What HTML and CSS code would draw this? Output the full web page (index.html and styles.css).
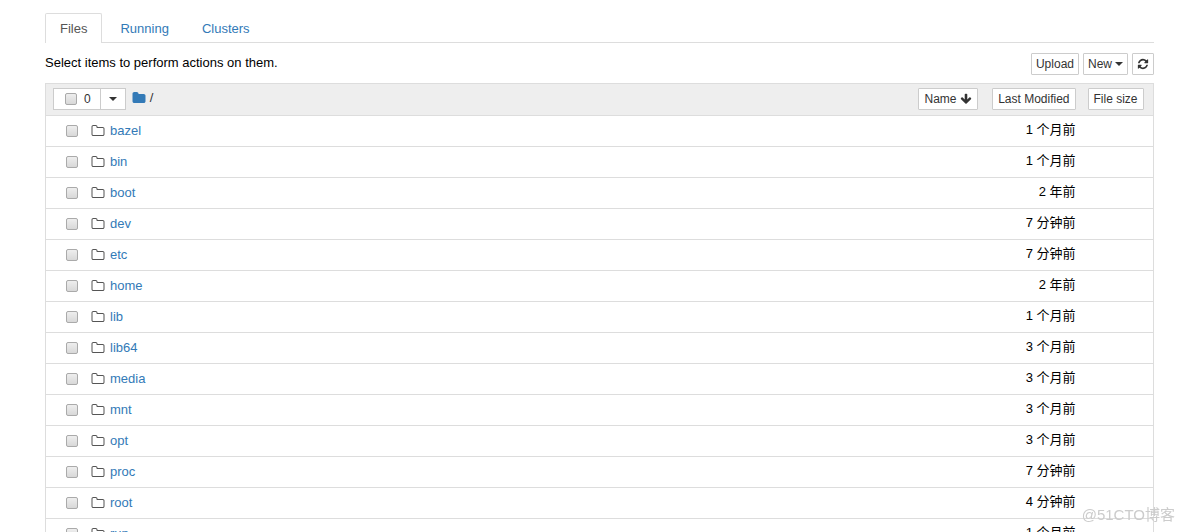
FILE: index.html
```html
<!DOCTYPE html>
<html lang="en">
<head>
  <meta charset="UTF-8">
  <title>Home</title>
  <link rel="stylesheet" href="styles.css">
</head>
<body>

<svg class="sprite" aria-hidden="true">
  <symbol id="folder-o" viewBox="0 0 1792 1792"><path d="M1600 1312v-704q0-40-28-68t-68-28h-704q-40 0-68-28t-28-68v-64q0-40-28-68t-68-28h-320q-40 0-68 28t-28 68v960q0 40 28 68t68 28h1216q40 0 68-28t28-68zm128-704v704q0 92-66 158t-158 66h-1216q-92 0-158-66t-66-158v-960q0-92 66-158t158-66h320q92 0 158 66t66 158v32h672q92 0 158 66t66 158z"/></symbol>
  <symbol id="folder" viewBox="0 0 1792 1792"><path d="M1728 608v704q0 92-66 158t-158 66h-1216q-92 0-158-66t-66-158v-960q0-92 66-158t158-66h320q92 0 158 66t66 158v32h672q92 0 158 66t66 158z"/></symbol>
  <symbol id="arrow-down" viewBox="0 0 1792 1792"><path d="M1675 832q0 53-37 90l-651 652q-39 37-91 37-53 0-90-37l-651-652q-38-36-38-90 0-53 38-91l74-75q39-37 91-37 53 0 90 37l294 294v-704q0-52 38-90t90-38h128q52 0 90 38t38 90v704l294-294q37-37 90-37 52 0 91 37l75 75q37 39 37 91z"/></symbol>
  <symbol id="refresh" viewBox="0 0 1792 1792"><path d="M1639 1056q0 5-1 7-64 268-268 434.5t-478 166.5q-146 0-282.5-55t-243.5-157l-129 129q-19 19-45 19t-45-19-19-45v-448q0-26 19-45t45-19h448q26 0 45 19t19 45-19 45l-137 137q71 66 161 102t187 36q134 0 250-65t186-179q11-17 53-117 8-23 30-23h192q13 0 22.5 9.5t9.5 22.5zm25-800v448q0 26-19 45t-45 19h-448q-26 0-45-19t-19-45 19-45l138-138q-148-137-349-137-134 0-250 65t-186 179q-11 17-53 117-8 23-30 23h-199q-13 0-22.5-9.5t-9.5-22.5v-7q65-268 270-434.5t480-166.5q146 0 284 55.5t245 156.5l130-129q19-19 45-19t45 19 19 45z"/></symbol>
</svg>

<div class="container">
  <nav class="tabs">
    <a class="tab active" href="#files">Files</a>
    <a class="tab" href="#running">Running</a>
    <a class="tab" href="#clusters">Clusters</a>
  </nav>

  <div class="toolbar">
    <p class="info">Select items to perform actions on them.</p>
    <div class="actions">
      <button class="btn" type="button">Upload</button>
      <button class="btn" type="button">New <span class="caret"></span></button>
      <button class="btn" type="button" aria-label="Refresh"><svg class="icon-sm"><use href="#refresh"/></svg></button>
    </div>
  </div>

  <table class="list">
    <thead>
      <tr>
        <th>
          <div class="head">
            <div class="selector">
              <label class="select-all"><input type="checkbox">0</label>
              <button class="select-menu" type="button" aria-label="Selection menu"><span class="caret"></span></button>
            </div>
            <div class="breadcrumb"><a href="#home" aria-label="Home"><svg class="icon"><use href="#folder"/></svg></a> /</div>
            <button class="btn sort-name" type="button">Name <svg class="icon-sm"><use href="#arrow-down"/></svg></button>
          </div>
        </th>
        <th class="modified"><button class="btn" type="button">Last Modified</button></th>
        <th class="size"><button class="btn" type="button">File size</button></th>
      </tr>
    </thead>
    <tbody>
      <tr>
        <td><div class="item"><input type="checkbox" aria-label="bazel"><svg class="icon"><use href="#folder-o"/></svg><a href="#bazel">bazel</a></div></td>
        <td class="modified">1 个月前</td>
        <td></td>
      </tr>
      <tr>
        <td><div class="item"><input type="checkbox" aria-label="bin"><svg class="icon"><use href="#folder-o"/></svg><a href="#bin">bin</a></div></td>
        <td class="modified">1 个月前</td>
        <td></td>
      </tr>
      <tr>
        <td><div class="item"><input type="checkbox" aria-label="boot"><svg class="icon"><use href="#folder-o"/></svg><a href="#boot">boot</a></div></td>
        <td class="modified">2 年前</td>
        <td></td>
      </tr>
      <tr>
        <td><div class="item"><input type="checkbox" aria-label="dev"><svg class="icon"><use href="#folder-o"/></svg><a href="#dev">dev</a></div></td>
        <td class="modified">7 分钟前</td>
        <td></td>
      </tr>
      <tr>
        <td><div class="item"><input type="checkbox" aria-label="etc"><svg class="icon"><use href="#folder-o"/></svg><a href="#etc">etc</a></div></td>
        <td class="modified">7 分钟前</td>
        <td></td>
      </tr>
      <tr>
        <td><div class="item"><input type="checkbox" aria-label="home"><svg class="icon"><use href="#folder-o"/></svg><a href="#home">home</a></div></td>
        <td class="modified">2 年前</td>
        <td></td>
      </tr>
      <tr>
        <td><div class="item"><input type="checkbox" aria-label="lib"><svg class="icon"><use href="#folder-o"/></svg><a href="#lib">lib</a></div></td>
        <td class="modified">1 个月前</td>
        <td></td>
      </tr>
      <tr>
        <td><div class="item"><input type="checkbox" aria-label="lib64"><svg class="icon"><use href="#folder-o"/></svg><a href="#lib64">lib64</a></div></td>
        <td class="modified">3 个月前</td>
        <td></td>
      </tr>
      <tr>
        <td><div class="item"><input type="checkbox" aria-label="media"><svg class="icon"><use href="#folder-o"/></svg><a href="#media">media</a></div></td>
        <td class="modified">3 个月前</td>
        <td></td>
      </tr>
      <tr>
        <td><div class="item"><input type="checkbox" aria-label="mnt"><svg class="icon"><use href="#folder-o"/></svg><a href="#mnt">mnt</a></div></td>
        <td class="modified">3 个月前</td>
        <td></td>
      </tr>
      <tr>
        <td><div class="item"><input type="checkbox" aria-label="opt"><svg class="icon"><use href="#folder-o"/></svg><a href="#opt">opt</a></div></td>
        <td class="modified">3 个月前</td>
        <td></td>
      </tr>
      <tr>
        <td><div class="item"><input type="checkbox" aria-label="proc"><svg class="icon"><use href="#folder-o"/></svg><a href="#proc">proc</a></div></td>
        <td class="modified">7 分钟前</td>
        <td></td>
      </tr>
      <tr>
        <td><div class="item"><input type="checkbox" aria-label="root"><svg class="icon"><use href="#folder-o"/></svg><a href="#root">root</a></div></td>
        <td class="modified">4 分钟前</td>
        <td></td>
      </tr>
      <tr>
        <td><div class="item"><input type="checkbox" aria-label="run"><svg class="icon"><use href="#folder-o"/></svg><a href="#run">run</a></div></td>
        <td class="modified">1 个月前</td>
        <td></td>
      </tr>
    </tbody>
  </table>
</div>

<div class="watermark">@51CTO博客</div>

</body>
</html>
```
FILE: styles.css
```css
* {
  box-sizing: border-box;
}

body {
  margin: 0;
  height: 100vh;
  overflow: hidden;
  background: #fff;
  color: #000;
  font-family: "Liberation Sans", Arial, "Noto Sans CJK SC", sans-serif;
  font-size: 13px;
  line-height: 20px;
}

a {
  color: #337ab7;
  text-decoration: none;
}

.sprite {
  display: none;
}

.icon {
  width: 14px;
  height: 14px;
  fill: currentColor;
}

.icon-sm {
  width: 12px;
  height: 12px;
  fill: currentColor;
}

.container {
  padding: 13px 30px 0 45px;
}

/* tabs */
.tabs {
  display: flex;
  gap: 3px;
  border-bottom: 1px solid #ddd;
}

.tab {
  height: 29px;
  padding: 5px 14px;
  border: 1px solid transparent;
  border-bottom: none;
}

.tab.active {
  height: 30px;
  margin-bottom: -1px;
  background: #fff;
  border-color: #ddd;
  border-radius: 2px 2px 0 0;
  color: #555;
}

/* toolbar */
.toolbar {
  display: flex;
  justify-content: space-between;
  padding: 10px 0 8px;
}

.info {
  margin: 0;
}

.actions {
  display: flex;
  gap: 4px;
}

.btn {
  display: inline-flex;
  align-items: center;
  gap: 3px;
  height: 22px;
  padding: 0 4px;
  background: #fff;
  border: 1px solid #ccc;
  border-radius: 1px;
  color: #333;
  font-family: inherit;
  font-size: 12px;
  cursor: pointer;
}

.caret {
  border-top: 4px solid #333;
  border-left: 4px solid transparent;
  border-right: 4px solid transparent;
}

/* file list */
.list {
  width: 100%;
  border-collapse: collapse;
  border: 1px solid #ddd;
}

.list th {
  height: 32px;
  padding: 0 0 1px;
  background: #eee;
  font-weight: normal;
  text-align: left;
}

.list td {
  height: 31px;
  padding: 0;
  border-top: 1px solid #ddd;
}

.list th .btn {
  padding: 0 5px;
}

.head {
  display: flex;
  align-items: center;
  padding-left: 7px;
}

.selector {
  display: flex;
  height: 22px;
  background: #fff;
  border: 1px solid #ccc;
  color: #333;
  font-size: 12px;
}

.select-all {
  display: flex;
  align-items: center;
  gap: 7px;
  padding: 0 9px 0 11px;
}

.select-menu {
  display: flex;
  align-items: center;
  padding: 0 8px;
  background: #fff;
  border: none;
  border-left: 1px solid #ccc;
}

.breadcrumb {
  display: flex;
  align-items: center;
  gap: 4px;
  margin-left: 6px;
  padding-bottom: 2px;
  color: #333;
}

.breadcrumb a {
  display: flex;
}

.sort-name {
  margin-left: auto;
}

.list th.modified {
  width: 98px;
  text-align: right;
}

.list td.modified {
  padding-bottom: 3px;
  text-align: right;
}

.list th.size {
  width: 78px;
  padding-left: 12px;
}

.item {
  display: flex;
  align-items: center;
  padding-left: 20px;
}

.item .icon {
  margin: 0 5px 0 13px;
  color: #555;
}

input[type="checkbox"] {
  appearance: none;
  width: 12px;
  height: 12px;
  margin: 0;
  background: linear-gradient(#eee, #d8d8d8);
  border: 1px solid #aaa;
  border-radius: 2px;
}

.watermark {
  position: fixed;
  right: 9px;
  bottom: 7px;
  color: #ccc;
  font-size: 15px;
}
```
